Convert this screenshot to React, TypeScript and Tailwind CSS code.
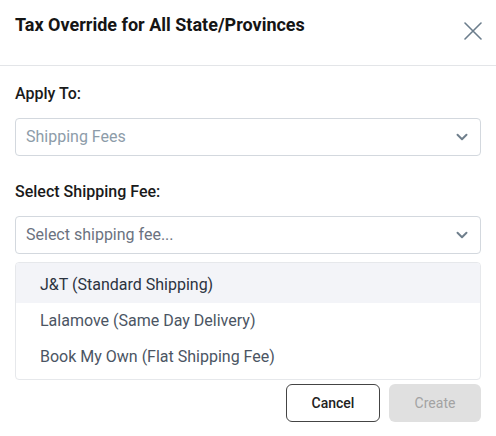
import React from "react";
import { ChevronDown } from "lucide-react";

function Select({ text, textClass }: { text: string; textClass: string }) {
  return (
    <div className="flex h-[38px] items-center justify-between rounded-[4px] border border-[#d3d8de] bg-white pl-[10px] pr-[9px]">
      <span className={`text-[16px] ${textClass}`}>{text}</span>
      <ChevronDown size={18} strokeWidth={2.6} className="text-[#6f7f8c]" />
    </div>
  );
}

export default function App() {
  const items = [
    "J&T (Standard Shipping)",
    "Lalamove (Same Day Delivery)",
    "Book My Own (Flat Shipping Fee)",
  ];
  return (
    <div
      className="h-[436px] w-[496px] overflow-hidden bg-white"
      style={{ fontFamily: "Roboto, 'Liberation Sans', sans-serif" }}
    >
      <div className="flex h-[66px] items-start justify-between border-b border-[#e3e5e8] pl-[15px] pr-[14px] pt-[13px]">
        <h1 className="text-[18px] font-bold leading-[24px] text-[#151515]">
          Tax Override for All State/Provinces
        </h1>
        <svg width="18" height="18" viewBox="0 0 18 18" className="mt-[9px]">
          <path d="M1 1L17 17M17 1L1 17" stroke="#6b7d8c" strokeWidth="1.6" strokeLinecap="round" />
        </svg>
      </div>
      <div className="px-[15px] pt-[18px]">
        <div className="mb-[14px] text-[16px] font-medium leading-[20px] text-[#1a1a1a]">Apply To:</div>
        <Select text="Shipping Fees" textClass="text-[#8d9ca9]" />
        <div className="mb-[14px] mt-[26px] text-[16px] font-medium leading-[20px] text-[#1a1a1a]">
          Select Shipping Fee:
        </div>
        <Select text="Select shipping fee..." textClass="text-[#6b7280]" />
        <div className="mt-[8px] overflow-hidden rounded-[4px] border border-[#e6e8eb] bg-white pb-[4px]">
          {items.map((it, i) => (
            <div
              key={it}
              className={`flex items-center pl-[24px] text-[16px] ${
                i === 0 ? "h-[40px] bg-[#f3f4f8] pt-[3px] text-[#2b3340]" : "h-[36px] text-[#4b5563]"
              }`}
            >
              {it}
            </div>
          ))}
        </div>
        <div className="mt-[4px] flex justify-end gap-[9px]">
          <button className="h-[38px] w-[94px] rounded-[6px] border border-[#444] text-[14px] font-medium text-[#222]">
            Cancel
          </button>
          <button className="h-[38px] w-[92px] rounded-[6px] bg-[#e0e0e0] text-[14px] text-[#a3a3a3]">
            Create
          </button>
        </div>
      </div>
    </div>
  );
}
